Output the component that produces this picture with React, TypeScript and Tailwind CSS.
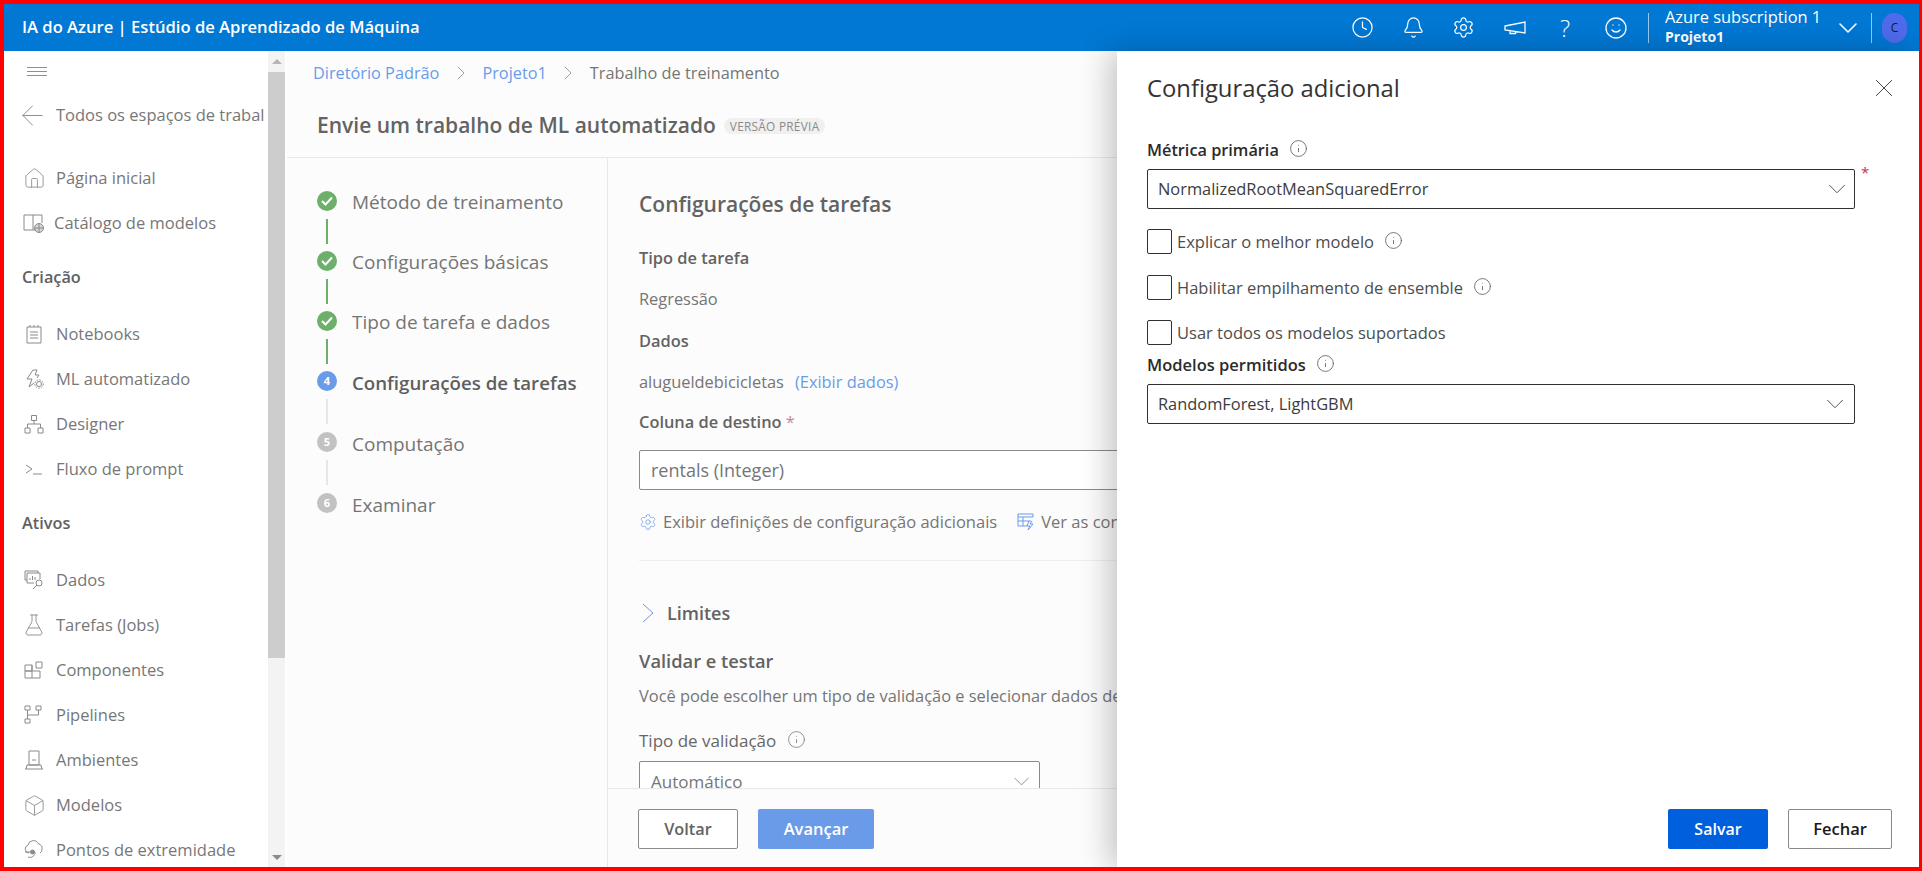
import React from 'react';
import { ArrowLeft, Bell, Box, ChevronDown, ChevronRight, Clock, FlaskConical, Home, Info, Settings, Smile, X } from 'lucide-react';

const Ic = ({ children }: { children: React.ReactNode }) => (
  <svg width="20" height="20" viewBox="0 0 20 20" fill="none" stroke="currentColor" strokeWidth="1">
    {children}
  </svg>
);

const Catalog = () => (
  <svg width="22" height="20" viewBox="0 0 22 20" fill="none" stroke="currentColor" strokeWidth="1">
    <path d="M1 2h9v15H1zM10 2h9v8M13 17h-3" />
    <circle cx="16" cy="15" r="4.5" fill="currentColor" fillOpacity="0.35" />
    <path d="M16 10.5v9M11.5 15h9" />
  </svg>
);
const AutoMl = () => (
  <Ic>
    <path d="M9 1L3 10h5l-3 8 5-4M9 1h4l-2 5h4l-2 3" />
    <circle cx="15" cy="15" r="2.5" />
    <circle cx="15" cy="15" r="4.2" strokeDasharray="1.6 1.2" />
  </Ic>
);
const Designer = () => (
  <Ic>
    <path d="M7.5 1.5h5v5h-5zM1 14h5v5H1zM14 14h5v5h-5zM10 6.5V10M3.5 14v-4h13v4" />
  </Ic>
);
const Prompt = () => (
  <Ic>
    <path d="M2 6l6 4-6 4M9 15h9" />
  </Ic>
);
const Notebook = () => (
  <Ic>
    <path d="M3 3h14v16H3zM6 1v2M10 1v2M14 1v2M6 8h8M6 11h8M6 14h8" />
  </Ic>
);
const Dados = () => (
  <Ic>
    <path d="M1 1h13v2M1 1v9h2M3 3h13v6M3 3v10h7M6 10V8M8.500 10V6M11 10V7" />
    <circle cx="15" cy="13" r="3" />
    <path d="M13 15l-4 4" />
  </Ic>
);
const Componentes = () => (
  <Ic>
    <path d="M1 5h7v6H1zM8 5v6M1 11h15v7H1zM8 11v7M12 2h6v6h-6z" />
  </Ic>
);
const Pipelines = () => (
  <Ic>
    <path d="M1 1h5v4H1zM12 1h5v4h-5zM1 14h5v4H1zM3.500 5v9M3.500 10h11V5" />
  </Ic>
);
const Ambientes = () => (
  <Ic>
    <path d="M5 1h10v14H5zM1 19h18M2 19l1-4h14l1 4M8 10h4" />
  </Ic>
);
const Endpoints = () => (
  <Ic>
    <path d="M5 13a4 4 0 0 1-1-7.800A5.500 5.500 0 0 1 14.500 4a4 4 0 0 1 3.500 5 4 4 0 0 1-2 4" />
    <circle cx="8.500" cy="12" r="2" fill="currentColor" />
    <path d="M1 12h5M11 12a5 5 0 0 1-7 5" />
  </Ic>
);
const Megaphone = () => (
  <svg width="22" height="20" viewBox="0 0 22 20" fill="none" stroke="currentColor" strokeWidth="1.300">
    <path d="M1 8l20-4v11L1 12zM6 13v2.500h5.500V14" />
  </svg>
);
const QuickEdit = () => (
  <svg width="18" height="18" viewBox="0 0 18 18" fill="none" stroke="currentColor" strokeWidth="1">
    <path d="M1 1h15v3H1zM1 4v9h9M6 4v9M1 8h13M12 8l-2 5h3l-2 4 5-6h-3l2-3" />
  </svg>
);

const sideTop = [
  { label: 'Página inicial', icon: <Home size={23} strokeWidth={0.900} /> },
  { label: 'Catálogo de modelos', icon: <Catalog />, tight: true },
];
const sideAuth = [
  { label: 'Notebooks', icon: <Notebook /> },
  { label: 'ML automatizado', icon: <AutoMl /> },
  { label: 'Designer', icon: <Designer /> },
  { label: 'Fluxo de prompt', icon: <Prompt /> },
];
const sideAssets = [
  { label: 'Dados', icon: <Dados /> },
  { label: 'Tarefas (Jobs)', icon: <FlaskConical size={24} strokeWidth={0.900} /> },
  { label: 'Componentes', icon: <Componentes /> },
  { label: 'Pipelines', icon: <Pipelines /> },
  { label: 'Ambientes', icon: <Ambientes /> },
  { label: 'Modelos', icon: <Box size={23} strokeWidth={0.900} /> },
  { label: 'Pontos de extremidade', icon: <Endpoints /> },
];

const steps = [
  { label: 'Método de treinamento', state: 'done' },
  { label: 'Configurações básicas', state: 'done' },
  { label: 'Tipo de tarefa e dados', state: 'done' },
  { label: 'Configurações de tarefas', state: 'active', n: 4 },
  { label: 'Computação', state: 'todo', n: 5 },
  { label: 'Examinar', state: 'todo', n: 6 },
];

type NavProps = { label: string; icon: React.ReactNode; tight?: boolean };

const NavItem = ({ label, icon, tight }: NavProps) => (
  <div className="flex h-[45px] items-center pt-[1px] text-[16.500px] text-[#777] whitespace-nowrap">
    <span className="ml-[18px] flex w-[24px] justify-center text-[#8a8a8a]">{icon}</span>
    <span className={tight ? 'ml-[8px]' : 'ml-[10px]'}>{label}</span>
  </div>
);

const SectionLabel = ({ children, className }: { children: React.ReactNode; className: string }) => (
  <div className={`flex h-[45px] items-center pt-[1px] pl-[18px] text-[16.300px] font-semibold text-[#616161] ${className}`}>{children}</div>
);

const Step = ({ label, state, n, last }: { label: string; state: string; n?: number; last: boolean }) => (
  <div>
    <div className="flex h-[20px] items-center">
      {state === 'done' && (
        <span className="flex h-[20px] w-[20px] items-center justify-center rounded-full bg-[#6cb06c] text-white">
          <svg width="12" height="10" viewBox="0 0 12 10" fill="none" stroke="currentColor" strokeWidth="2">
            <path d="M1 5l3.500 3.500L11 1.500" />
          </svg>
        </span>
      )}
      {state === 'active' && (
        <span className="flex h-[20px] w-[20px] items-center justify-center rounded-full bg-[#6a9be8] text-[11px] font-bold text-white">{n}</span>
      )}
      {state === 'todo' && (
        <span className="flex h-[20px] w-[20px] items-center justify-center rounded-full bg-[#c2c2c2] text-[11px] font-bold text-white">{n}</span>
      )}
      <span className={`ml-[15px] whitespace-nowrap ${state === 'done' ? 'mt-[3px] text-[19px] text-[#757575]' : state === 'active' ? 'mt-[4px] text-[18.700px] font-semibold text-[#5f5f5f]' : 'mt-[4px] text-[19px] text-[#757575]'}`}>{label}</span>
    </div>
    {!last && <div className={`ml-[9px] mt-[8px] h-[25px] w-[2px] ${state === 'done' ? 'mb-[7px] bg-[#6cb06c]' : 'mb-[8px] bg-[#e6e6e6]'}`} />}
  </div>
);

const Check = ({ label, info, className }: { label: string; info?: boolean; className: string }) => (
  <div className={`flex h-[25px] items-center ${className}`}>
    <span className="h-[25px] w-[25px] rounded-[2px] border border-[#323130]" />
    <span className="ml-[5px] pt-[2px] text-[16.500px] text-[#4d4d4d]">{label}</span>
    {info && <Info size={19} strokeWidth={1} className="ml-[10px] -mt-[2px] text-[#555]" />}
  </div>
);

const PanelSelect = ({ value, chevronClass }: { value: string; chevronClass: string }) => (
  <div className="flex h-[40px] w-[708px] items-center rounded-[2px] border border-[#323130] pl-[10px] text-[16.400px] text-[#3c3c3c]">
    <span className="pt-[1px]">{value}</span>
    <ChevronDown size={30} strokeWidth={0.800} className={`ml-auto text-[#555] ${chevronClass}`} />
  </div>
);

export default function App() {
  return (
    <div className="relative flex h-[871px] w-full flex-col overflow-hidden border-t-4 border-r-[3px] border-b-4 border-l-4 border-[#ff0000] bg-white font-['Open_Sans',sans-serif]">
      <header className="flex h-[47px] shrink-0 items-center bg-[#0078d4] pl-[18px] pr-[12px] text-white">
        <span className="text-[16.600px] font-semibold whitespace-nowrap">IA do Azure | Estúdio de Aprendizado de Máquina</span>
        <div className="ml-auto flex items-center">
          <span className="flex w-[50.600px] justify-center"><Clock size={23} strokeWidth={1.300} /></span>
          <span className="flex w-[50.600px] justify-center"><Bell size={23} strokeWidth={1.300} /></span>
          <span className="flex w-[50.600px] justify-center"><Settings size={23} strokeWidth={1.300} /></span>
          <span className="flex w-[50.600px] justify-center"><Megaphone /></span>
          <span className="flex w-[50.600px] justify-center text-[24px] font-light leading-none">?</span>
          <span className="flex w-[50.600px] justify-center"><Smile size={24} strokeWidth={1.300} /></span>
          <span className="ml-[7px] h-[30px] w-px bg-white/60" />
          <div className="ml-[16px] w-[167px] -mt-[3px]">
            <div className="text-[16.400px] leading-[22px] whitespace-nowrap">Azure subscription 1</div>
            <div className="text-[14px] font-bold leading-[18px]">Projeto1</div>
          </div>
          <ChevronDown size={32} strokeWidth={1.200} />
          <span className="ml-[7px] h-[30px] w-px bg-white/60" />
          <span className="ml-[10px] flex h-[30px] w-[25px] items-center justify-center rounded-full bg-[#4f6bed] text-[12px] text-[#1a1a1a]">C</span>
        </div>
      </header>

      <div className="flex min-h-0 flex-1">
        <aside className="h-full w-[264px] shrink-0 overflow-hidden">
          <div className="flex h-[41px] items-center pl-[23px]">
            <div className="flex w-[20px] flex-col gap-[3px]">
              <span className="h-px bg-[#5f96ea]" />
              <span className="h-px bg-[#5f96ea]" />
              <span className="h-px bg-[#5f96ea]" />
            </div>
          </div>
          <div className="flex h-[45px] items-center pt-[1px] text-[16.500px] text-[#777] whitespace-nowrap">
            <ArrowLeft size={33} strokeWidth={0.700} className="ml-[12px] text-[#8a8a8a]" />
            <span className="ml-[7px]">Todos os espaços de trabal</span>
          </div>
          <div className="mt-[18px]">
            {sideTop.map((item) => <NavItem key={item.label} {...item} />)}
          </div>
          <SectionLabel className="mt-[9px] mb-[12px]">Criação</SectionLabel>
          {sideAuth.map((item) => <NavItem key={item.label} {...item} />)}
          <SectionLabel className="mt-[9px] mb-[12px]">Ativos</SectionLabel>
          {sideAssets.map((item) => <NavItem key={item.label} {...item} />)}
        </aside>

        <div className="flex h-full w-[17px] shrink-0 flex-col bg-[#f3f3f3]">
          <div className="flex h-[21px] items-center justify-center">
            <span className="h-0 w-0 border-x-[5px] border-b-[5px] border-x-transparent border-b-[#b5b5b5]" />
          </div>
          <div className="h-[586px] bg-[#cdcdcd]" />
          <div className="mt-auto flex h-[20px] items-center justify-center">
            <span className="h-0 w-0 border-x-[5px] border-t-[5px] border-x-transparent border-t-[#8a8a8a]" />
          </div>
        </div>

        <main className="ml-[2px] flex min-w-0 flex-1 flex-col bg-[#fcfcfc]">
          <nav className="flex h-[44px] shrink-0 items-center pl-[26px] text-[16.300px] whitespace-nowrap">
            <span className="text-[#6a9be8]">Diretório Padrão</span>
            <ChevronRight size={24} strokeWidth={0.800} className="mx-[9.500px] text-[#888]" />
            <span className="text-[#6a9be8]">Projeto1</span>
            <ChevronRight size={24} strokeWidth={0.800} className="mx-[9.500px] text-[#888]" />
            <span className="text-[#757575]">Trabalho de treinamento</span>
          </nav>
          <div className="flex h-[63px] shrink-0 items-center border-b border-[#e8e8e8] pl-[30px]">
            <h1 className="text-[21px] font-semibold text-[#636363]">Envie um trabalho de ML automatizado</h1>
            <span className="ml-[8px] rounded-full bg-[#f0f0f0] px-[6px] text-[11.800px] leading-[16px] tracking-wide text-[#8a8a8a]">VERSÃO PRÉVIA</span>
          </div>

          <div className="flex min-h-0 flex-1">
            <div className="w-[320px] shrink-0 pt-[33px] pl-[30px]">
              {steps.map((s, i) => <Step key={s.label} label={s.label} state={s.state} n={s.n} last={i === steps.length - 1} />)}
            </div>
            <div className="flex min-w-0 flex-1 flex-col border-l border-[#e8e8e8]">
              <div className="min-h-0 flex-1 overflow-hidden pl-[31px] whitespace-nowrap text-[16.400px] leading-[22px] text-[#757575]">
                <h2 className="mt-[31px] text-[21px] font-semibold leading-[30px] text-[#636363]">Configurações de tarefas</h2>
                <div className="mt-[28px] font-semibold text-[#636363]">Tipo de tarefa</div>
                <div className="mt-[19px]">Regressão</div>
                <div className="mt-[20px] font-semibold text-[#636363]">Dados</div>
                <div className="mt-[19px]">
                  alugueldebicicletas<span className="ml-[11px] text-[#6a9be8]">(Exibir dados)</span>
                </div>
                <div className="mt-[18px] font-semibold text-[#636363]">
                  Coluna de destino <span className="font-normal text-[#c98a8a]">*</span>
                </div>
                <div className="mt-[17px] flex h-[40px] w-[700px] items-center rounded-[2px] border border-[#8a8a8a] bg-white pl-[11px] text-[18px]">rentals (Integer)</div>
                <div className="mt-[21px] flex items-center text-[16.500px]">
                  <Settings size={18} strokeWidth={1} className="text-[#6a9be8]" />
                  <span className="ml-[6px]">Exibir definições de configuração adicionais</span>
                  <span className="ml-[20px] text-[#6a9be8]"><QuickEdit /></span>
                  <span className="ml-[6px]">Ver as configurações</span>
                </div>
                <div className="mt-[27px] h-px w-[560px] bg-[#eeeeee]" />
                <div className="mt-[39px] flex h-[26px] items-center text-[18px] font-semibold text-[#636363]">
                  <svg width="12" height="20" viewBox="0 0 12 20" fill="none" stroke="#7a8fd8" strokeWidth="1" className="ml-[3px]">
                    <path d="M1 1l10 9-10 9" />
                  </svg>
                  <span className="ml-[13px]">Limites</span>
                </div>
                <div className="mt-[24px] text-[18.300px] font-semibold text-[#636363]">Validar e testar</div>
                <div className="mt-[13px]">Você pode escolher um tipo de validação e selecionar dados de teste</div>
                <div className="mt-[23px] flex items-center text-[17px] font-medium text-[#666]">
                  Tipo de validação
                  <Info size={19} strokeWidth={1} className="ml-[11px] -mt-[3px] text-[#777]" />
                </div>
                <div className="mt-[9px] flex h-[40px] w-[401px] items-center rounded-[2px] border border-[#8a8a8a] bg-white pl-[11px] text-[17px]">
                  <span className="pt-[2px]">Automático</span>
                  <ChevronDown size={27} strokeWidth={0.800} className="ml-auto mr-[4px] text-[#888]" />
                </div>
              </div>
              <div className="flex h-[79px] shrink-0 gap-[20px] border-t border-[#e8e8e8] pt-[20px] pl-[30px]">
                <button className="h-[40px] w-[100px] rounded-[2px] border border-[#8a8a8a] bg-white text-[16.300px] font-semibold text-[#636363]">Voltar</button>
                <button className="h-[40px] w-[116px] rounded-[2px] bg-[#6a9be8] text-[16.500px] font-semibold text-white">Avançar</button>
              </div>
            </div>
          </div>
        </main>
      </div>

      <section className="absolute top-[47px] right-0 bottom-0 left-[1113px] flex flex-col bg-white pl-[30px] text-[#2b2b2b] shadow-[-8px_0_28px_rgba(0,0,0,0.22)]">
        <div className="flex h-[76px] shrink-0 items-center pb-[1px]">
          <h2 className="text-[23.800px] text-[#333]">Configuração adicional</h2>
          <X size={30} strokeWidth={0.800} className="ml-auto mr-[20px] -mt-[2px] text-[#444]" />
        </div>
        <div className="mt-[12px] flex h-[22px] items-center text-[16.300px] font-semibold">
          Métrica primária
          <Info size={19} strokeWidth={1} className="ml-[10px] -mt-[3px] text-[#555]" />
        </div>
        <div className="relative mt-[8px]">
          <PanelSelect value="NormalizedRootMeanSquaredError" chevronClass="mr-[2px]" />
          <span className="absolute top-[-8px] left-[714px] text-[15px] text-[#c4314b]">*</span>
        </div>
        <Check label="Explicar o melhor modelo" info className="mt-[20px]" />
        <Check label="Habilitar empilhamento de ensemble" info className="mt-[21px]" />
        <Check label="Usar todos os modelos suportados" className="mt-[20px]" />
        <div className="mt-[9px] flex h-[22px] items-center text-[16.500px] font-semibold">
          Modelos permitidos
          <Info size={19} strokeWidth={1} className="ml-[10px] -mt-[3px] text-[#555]" />
        </div>
        <div className="mt-[8px]">
          <PanelSelect value="RandomForest, LightGBM" chevronClass="mr-[4px]" />
        </div>
        <div className="mt-auto mb-[18px] mr-[27px] flex justify-end gap-[20px]">
          <button className="h-[40px] w-[100px] rounded-[2px] bg-[#005fdc] text-[16px] font-semibold text-white">Salvar</button>
          <button className="h-[40px] w-[104px] rounded-[2px] border border-[#8a8a8a] bg-white text-[16.500px] font-semibold text-[#1a1a1a]">Fechar</button>
        </div>
      </section>
    </div>
  );
}
